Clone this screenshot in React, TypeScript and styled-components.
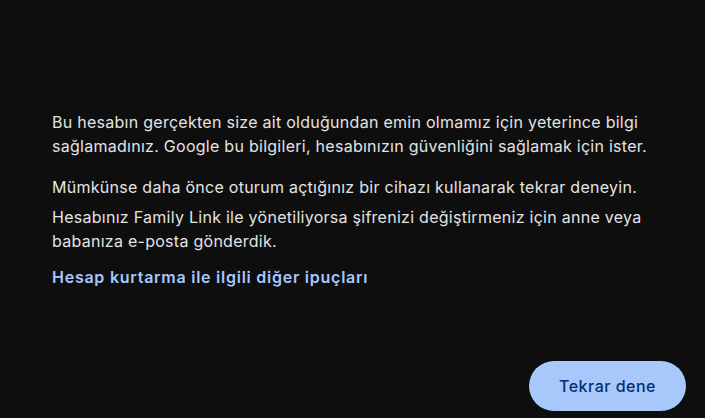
import React from "react";
import styled, { createGlobalStyle } from "styled-components";

const GlobalStyle = createGlobalStyle`
  html, body {
    margin: 0;
    padding: 0;
    background: #0e0e0e;
  }
  body {
    font-family: Inter, "Noto Sans", Arial, sans-serif;
    -webkit-font-smoothing: antialiased;
  }
`;

const Page = styled.div`
  width: 705px;
  height: 418px;
  box-sizing: border-box;
  display: flex;
  flex-direction: column;
  background: #0e0e0e;
  color: #e3e3e3;
  padding: 110px 19px 7px 52px;
`;

const Content = styled.div`
  flex: 1;
  max-width: 610px;
`;

const Text = styled.p<{ $gap?: number }>`
  margin: 0 0 ${(p) => p.$gap ?? 0}px 0;
  font-size: 16px;
  line-height: 24px;
  letter-spacing: 0.27px;
`;

const HelpLink = styled.a`
  display: inline-block;
  font-size: 16px;
  line-height: 24px;
  font-weight: 600;
  color: #a8c7fa;
  text-decoration: none;
  letter-spacing: 0.75px;
  cursor: pointer;
`;

const Actions = styled.div`
  display: flex;
  justify-content: flex-end;
`;

const RetryButton = styled.button`
  width: 157px;
  height: 50px;
  border: none;
  border-radius: 25px;
  background: #a8c7fa;
  color: #062e6f;
  font-family: Inter, "Noto Sans", Arial, sans-serif;
  font-size: 16px;
  font-weight: 500;
  letter-spacing: 0.5px;
  cursor: pointer;
`;

export default function App() {
  return (
    <>
      <GlobalStyle />
      <Page>
        <Content>
          <Text $gap={17}>
            Bu hesabın gerçekten size ait olduğundan emin olmamız için yeterince
            bilgi sağlamadınız. Google bu bilgileri, hesabınızın güvenliğini
            sağlamak için ister.
          </Text>
          <Text $gap={6}>
            Mümkünse daha önce oturum açtığınız bir cihazı kullanarak tekrar
            deneyin.
          </Text>
          <Text $gap={12}>
            Hesabınız Family Link ile yönetiliyorsa şifrenizi değiştirmeniz için
            anne veya babanıza e-posta gönderdik.
          </Text>
          <HelpLink>Hesap kurtarma ile ilgili diğer ipuçları</HelpLink>
        </Content>
        <Actions>
          <RetryButton>Tekrar dene</RetryButton>
        </Actions>
      </Page>
    </>
  );
}
